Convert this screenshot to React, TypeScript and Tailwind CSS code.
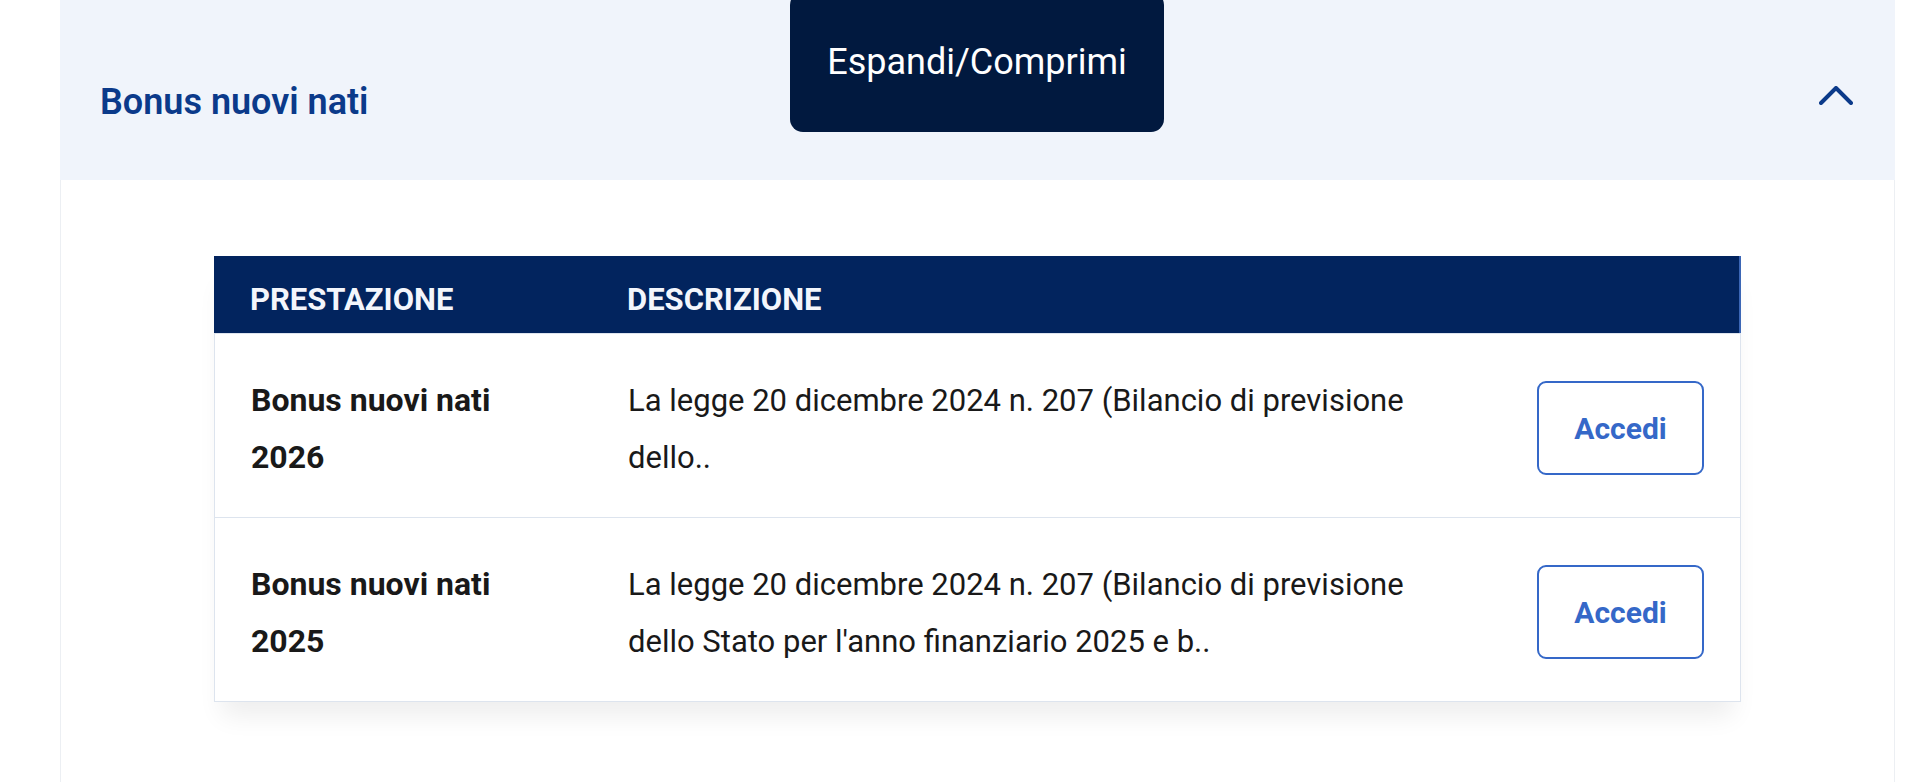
import { ReactNode } from "react"

const rows = [
  {
    title: "Bonus nuovi nati 2026",
    text: "La legge 20 dicembre 2024 n. 207 (Bilancio di previsione dello..",
  },
  {
    title: "Bonus nuovi nati 2025",
    text: "La legge 20 dicembre 2024 n. 207 (Bilancio di previsione dello Stato per l'anno finanziario 2025 e b..",
  },
]

function Row({ title, children }: { title: string; children: ReactNode }) {
  return (
    <div className="grid grid-cols-[413px_800px_1fr] items-center border-t border-[#dde4ee] pb-[31px] pt-[36px]">
      <div className="pl-[36px] pr-[110px] pt-[2px] text-[32px] font-bold leading-[57px] text-[#191919]">
        {title}
      </div>
      <div className="pt-[2px] text-[31px] leading-[57px] text-[#191919]">{children}</div>
      <div className="flex justify-end pr-[36px]">
        <button className="flex h-[94px] w-[167px] items-center justify-center rounded-[9px] border-2 border-[#3568c8] bg-white text-[30px] font-bold text-[#3568c8]">
          Accedi
        </button>
      </div>
    </div>
  )
}

export default function App() {
  return (
    <div className="min-h-screen bg-white font-['Roboto',sans-serif]">
      <div className="relative ml-[60px] w-[1835px]">

        {/* Accordion header */}
        <div className="flex h-[180px] items-center justify-between bg-[#f0f4fb] pl-[40px] pr-[42px] pt-[23px]">
          <h3 className="text-[36px] font-semibold text-[#0b3a8a]">Bonus nuovi nati</h3>
          <svg width="34" height="19" viewBox="0 0 34 19" className="-mt-[13px]">
            <polyline
              points="2,17 17,2 32,17"
              fill="none"
              stroke="#0b3a8a"
              strokeWidth="4"
              strokeLinecap="round"
              strokeLinejoin="round"
            />
          </svg>
        </div>

        {/* Tooltip */}
        <div className="absolute left-[730px] top-[-8px] flex h-[140px] w-[374px] items-center justify-center rounded-[13px] bg-[#01193f] text-[36px] text-white">
          Espandi/Comprimi
        </div>

        {/* Accordion body */}
        <div className="border-x border-[#eceff3] px-[153px] pb-[80px] pt-[76px]">
          <div className="border-x border-b border-[#dde4ee] shadow-[0_22px_24px_-8px_rgba(0,0,0,0.07)]">
            <div className="-mx-px grid h-[77px] grid-cols-[413px_1fr] items-center border-r-2 border-[#3b66b5] bg-[#02245e] pt-[11px] text-[31px] font-bold text-[#f3f6fc]">
              <div className="pl-[36px]">PRESTAZIONE</div>
              <div>DESCRIZIONE</div>
            </div>
            {rows.map((r) => (
              <Row key={r.title} title={r.title}>
                {r.text}
              </Row>
            ))}
          </div>
        </div>

      </div>
    </div>
  )
}
